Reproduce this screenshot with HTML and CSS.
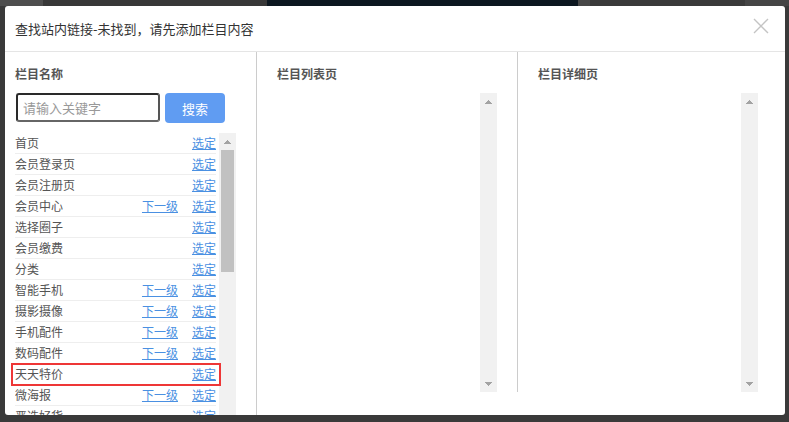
FILE: index.html
```html
<!DOCTYPE html>
<html>
	<head>
		<meta charset="UTF-8">
		<title>查找站内链接</title>
		<link rel="stylesheet" href="styles.css">
	</head>
	<body>
		<div class="dialog">
			<div class="dialog-head">
				<span class="dialog-title">查找站内链接-未找到，请先添加栏目内容</span>
				<span class="close">
					<svg width="16" height="16" viewBox="0 0 16 16"><path d="M1 1L15 15M15 1L1 15" stroke="#c4c4c4" stroke-width="1.4" fill="none"/></svg>
				</span>
			</div>
			<div class="dialog-body">
				<div class="col col-name">
					<h3>栏目名称</h3>
					<div class="search">
						<input type="text" placeholder="请输入关键字">
						<button>搜索</button>
					</div>
					<div class="menu-wrap">
						<ul class="menu">
							<li><span class="name">首页</span><a>选定</a></li>
							<li><span class="name">会员登录页</span><a>选定</a></li>
							<li><span class="name">会员注册页</span><a>选定</a></li>
							<li><span class="name">会员中心</span><a class="sub">下一级</a><a>选定</a></li>
							<li><span class="name">选择圈子</span><a>选定</a></li>
							<li><span class="name">会员缴费</span><a>选定</a></li>
							<li><span class="name">分类</span><a>选定</a></li>
							<li><span class="name">智能手机</span><a class="sub">下一级</a><a>选定</a></li>
							<li><span class="name">摄影摄像</span><a class="sub">下一级</a><a>选定</a></li>
							<li><span class="name">手机配件</span><a class="sub">下一级</a><a>选定</a></li>
							<li><span class="name">数码配件</span><a class="sub">下一级</a><a>选定</a></li>
							<li><span class="name">天天特价</span><a>选定</a></li>
							<li><span class="name">微海报</span><a class="sub">下一级</a><a>选定</a></li>
							<li><span class="name">严选好货</span><a>选定</a></li>
						</ul>
						<div class="scrollbar">
							<span class="arrow up"></span>
							<span class="thumb"></span>
							<span class="track"></span>
							<span class="arrow down"></span>
						</div>
					</div>
					<div class="mark"></div>
				</div>
				<div class="col col-list">
					<h3>栏目列表页</h3>
					<div class="box">
						<div class="scrollbar">
							<span class="arrow up"></span>
							<span class="track"></span>
							<span class="arrow down"></span>
						</div>
					</div>
				</div>
				<div class="col col-detail">
					<h3>栏目详细页</h3>
					<div class="box">
						<div class="scrollbar">
							<span class="arrow up"></span>
							<span class="track"></span>
							<span class="arrow down"></span>
						</div>
					</div>
				</div>
			</div>
		</div>
	</body>
</html>
```

FILE: styles.css
```css
html,
body {
	height: 422px;
}

body {
	margin: 0;
	overflow: hidden;
	font-family: "Noto Sans CJK SC", sans-serif;
	background: linear-gradient(to right, #4e4e4e 0 43px, #383838 43px 267px, #0c1720 267px 578px, #474747 578px 590px, #3a3a3a 590px 745px, #454545 745px) top left / 100% 6px no-repeat, #3a3a3a;
}

.dialog {
	width: 780px;
	height: 409px;
	margin: 6px 0 0 5px;
	background: #fff;
	border-radius: 3px;
	overflow: hidden;
}

.dialog-head {
	height: 45px;
	border-bottom: 1px solid #e5e5e5;
	display: flex;
	justify-content: space-between;
	padding: 0 16px 0 10px;
}

.dialog-title {
	font-size: 13px;
	line-height: 45px;
	color: #333;
}

.close {
	margin-top: 12px;
	width: 16px;
	height: 16px;
}

.close svg {
	display: block;
}

.dialog-body {
	display: flex;
	align-items: flex-start;
	padding-left: 10px;
}

.col h3 {
	margin: 12px 0 9px;
	font-size: 12px;
	line-height: 20px;
	font-weight: bold;
	color: #555;
}

.col-name {
	width: 221px;
	padding-right: 20px;
	border-right: 1px solid #ccc;
	position: relative;
}

.col-list {
	width: 220px;
	padding: 0 20px;
	border-right: 1px solid #ccc;
}

.col-detail {
	width: 220px;
	padding-left: 20px;
}

.search {
	display: flex;
	align-items: flex-start;
	gap: 5px;
}

.search input {
	box-sizing: border-box;
	width: 144px;
	height: 29px;
	margin: 0 0 0 1px;
	padding: 0 5px;
	border: 2px solid #2a2a2a;
	border-right-color: #555;
	border-bottom-color: #666;
	border-radius: 3px;
	font: 13px "Noto Sans CJK SC", sans-serif;
	color: #333;
	outline: none;
}

.search input::placeholder {
	color: #999;
}

.search button {
	width: 60px;
	height: 30px;
	border: none;
	border-radius: 4px;
	background: #609cf2;
	color: #fff;
	font: 13px "Noto Sans CJK SC", sans-serif;
	padding: 0;
}

.menu-wrap {
	display: flex;
	height: 310px;
	margin-top: 10px;
}

.menu {
	flex: 1;
	list-style: none;
	margin: 0 3px 0 0;
	padding: 0;
	overflow: hidden;
}

.menu li {
	display: flex;
	align-items: center;
	height: 20px;
	line-height: 20px;
	border-bottom: 1px solid #eee;
	font-size: 12px;
	color: #555;
}

.menu .name {
	flex: 1;
	white-space: nowrap;
}

.menu a {
	color: #4a90e2;
	text-decoration: underline;
	cursor: pointer;
}

.menu a.sub {
	margin-right: 14px;
}

/* 标注框 */
.mark {
	position: absolute;
	left: -4px;
	top: 311px;
	width: 210px;
	height: 23px;
	box-sizing: border-box;
	border: 2px solid #ee3636;
	pointer-events: none;
}

.box {
	height: 299px;
	display: flex;
	justify-content: flex-end;
}

/* 滚动条 */
.scrollbar {
	width: 17px;
	display: flex;
	flex-direction: column;
	background: #f1f1f1;
}

.scrollbar .arrow {
	height: 17px;
	flex: none;
}

.scrollbar .up {
	background: conic-gradient(from 139deg at 50% 0, #a3a3a3 82deg, transparent 0) no-repeat center / 7px 4px;
}

.scrollbar .down {
	background: conic-gradient(from -41deg at 50% 100%, #a3a3a3 82deg, transparent 0) no-repeat center / 7px 4px;
}

.scrollbar .thumb {
	height: 122px;
	margin: 0 2px;
	background: #c1c1c1;
	flex: none;
}

.scrollbar .track {
	flex: 1;
}
```
